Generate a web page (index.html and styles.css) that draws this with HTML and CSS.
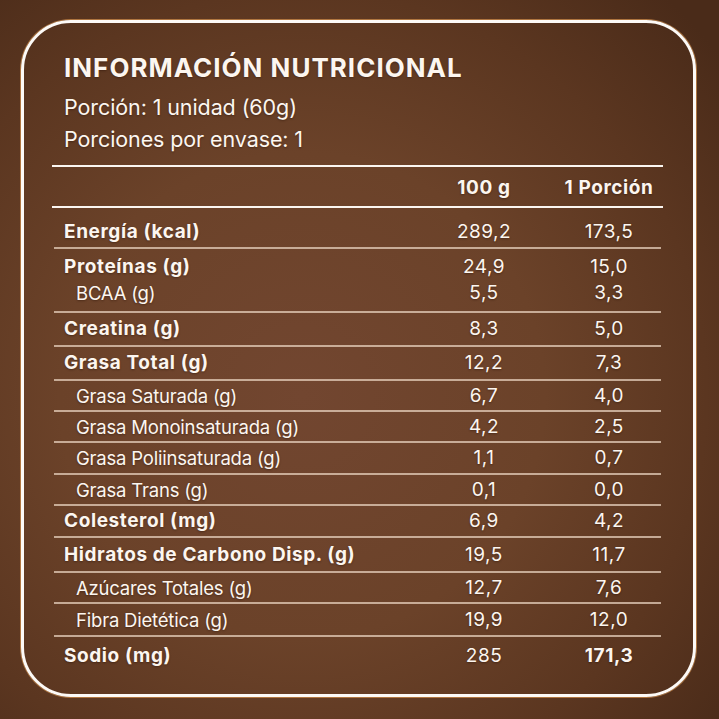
FILE: index.html
```html
<!DOCTYPE html>
<html lang="es">
<head>
<meta charset="utf-8">
<title>Información Nutricional</title>
<link rel="stylesheet" href="styles.css">
</head>
<body>
<div class="card">
  <h1 class="title">INFORMACIÓN NUTRICIONAL</h1>
  <p class="sub">Porción: 1 unidad (60g)</p>
  <p class="sub">Porciones por envase: 1</p>
  <div class="table">
    <div class="row head">
      <span></span><span class="num b">100 g</span><span class="num b">1 Porción</span>
    </div>
    <div class="row r-energy"><span class="lab b">Energía (kcal)</span><span class="num">289,2</span><span class="num">173,5</span></div>
    <div class="row r-prot">
      <span class="lab b">Proteínas (g)</span><span class="num">24,9</span><span class="num">15,0</span>
      <span class="lab s">BCAA (g)</span><span class="num">5,5</span><span class="num">3,3</span>
    </div>
    <div class="row h34"><span class="lab b">Creatina (g)</span><span class="num">8,3</span><span class="num">5,0</span></div>
    <div class="row h34"><span class="lab b">Grasa Total (g)</span><span class="num">12,2</span><span class="num">7,3</span></div>
    <div class="row h31"><span class="lab s">Grasa Saturada (g)</span><span class="num">6,7</span><span class="num">4,0</span></div>
    <div class="row h31"><span class="lab s">Grasa Monoinsaturada (g)</span><span class="num">4,2</span><span class="num">2,5</span></div>
    <div class="row h32"><span class="lab s">Grasa Poliinsaturada (g)</span><span class="num">1,1</span><span class="num">0,7</span></div>
    <div class="row h31"><span class="lab s">Grasa Trans (g)</span><span class="num">0,1</span><span class="num">0,0</span></div>
    <div class="row h32"><span class="lab b">Colesterol (mg)</span><span class="num">6,9</span><span class="num">4,2</span></div>
    <div class="row h35"><span class="lab b">Hidratos de Carbono Disp. (g)</span><span class="num">19,5</span><span class="num">11,7</span></div>
    <div class="row h31"><span class="lab s">Azúcares Totales (g)</span><span class="num">12,7</span><span class="num">7,6</span></div>
    <div class="row h33"><span class="lab s">Fibra Dietética (g)</span><span class="num">19,9</span><span class="num">12,0</span></div>
    <div class="row last"><span class="lab b">Sodio (mg)</span><span class="num">285</span><span class="num b">171,3</span></div>
  </div>
</div>
</body>
</html>
```
FILE: styles.css
```css
html, body {
  margin: 0;
  padding: 0;
}
body {
  width: 719px;
  height: 719px;
  overflow: hidden;
  background: radial-gradient(ellipse 75% 75% at 42% 55%, #724630 0%, #6b4229 45%, #5b3620 75%, #4a2b19 100%);
  font-family: Inter, Roboto, "Liberation Sans", sans-serif;
  color: #fcf6f0;
}
.card {
  box-sizing: border-box;
  margin: 20px 23px 0 21px;
  height: 677px;
  border: 3px solid #fdfaf7;
  border-radius: 50px;
  box-shadow: 0 0 0 1px rgba(196, 134, 72, 0.8);
  padding: 29px 32px 0 30px;
  text-shadow: 0 1px 2px rgba(40, 18, 6, 0.45);
}
.title {
  margin: 0 0 7px 10px;
  font-size: 26px;
  line-height: 32px;
  font-weight: 700;
  letter-spacing: 1px;
}
.sub {
  margin: 0 0 0 10px;
  font-size: 21.5px;
  line-height: 32px;
  font-weight: 400;
  letter-spacing: -0.1px;
}
.table {
  margin-top: 10px;
}
.row {
  box-sizing: border-box;
  display: grid;
  grid-template-columns: 1fr 104px 104px;
  column-gap: 21px;
  align-items: center;
  align-content: center;
  border-bottom: 2px solid rgba(236, 214, 194, 0.72);
  font-size: 18.5px;
  line-height: 26px;
  letter-spacing: -0.2px;
}
.head {
  margin: 0 -2px;
  padding: 3px 2px 0;
  height: 43px;
  border-top: 2px solid #fbf6f1;
  border-bottom: 2px solid #fbf6f1;
}
.r-energy { height: 41px; padding-top: 8px; }
.r-prot { height: 64px; }
.h31 { height: 31px; }
.h32 { height: 32px; }
.h33 { height: 33px; }
.h34 { height: 34px; }
.h35 { height: 35px; }
.last { height: 38px; border-bottom: none; }
.lab { padding-left: 10px; white-space: nowrap; }
.lab.s { padding-left: 22px; }
.num { text-align: center; font-size: 19px; letter-spacing: 0.5px; }
.b { font-weight: 700; font-size: 19px; letter-spacing: 0.6px; }
```
